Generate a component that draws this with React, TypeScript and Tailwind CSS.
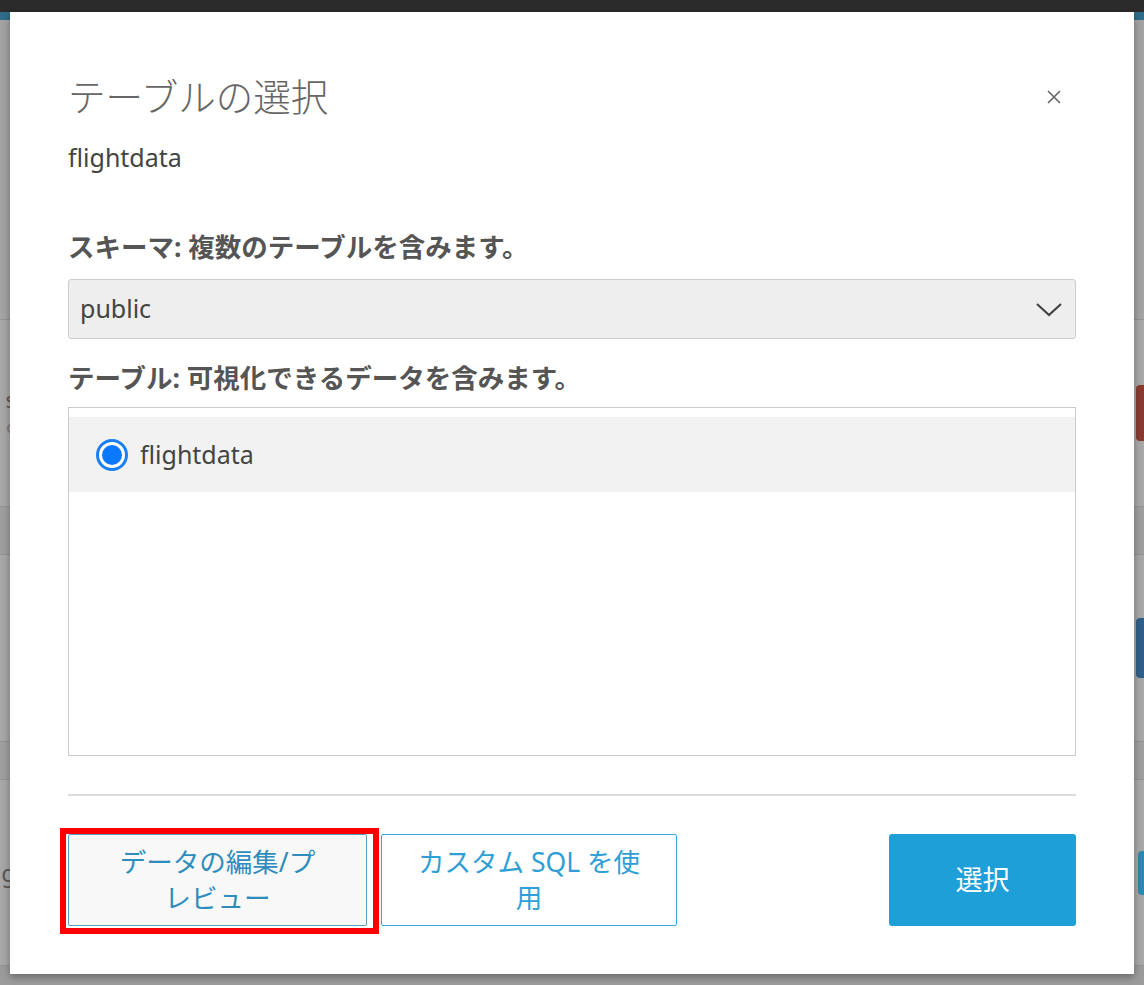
import React from "react";

const font = { fontFamily: '"Noto Sans", "Noto Sans CJK JP", sans-serif' };

function Background() {
  return (
    <div className="flex h-full w-full flex-col bg-[#a4a4a4]">
      <div className="h-[12px] bg-[#2b2b2b]" />
      <div className="h-[8px] bg-[#2f6c8a]" />
      <div className="h-[300px] border-b border-[#939393]" />
      <div className="flex h-[187px] items-center justify-between border-b border-[#939393] bg-[#a8a8a8]">
        <div className="flex h-full w-[10px] flex-col items-end justify-center overflow-hidden text-[22px] leading-[28px] text-[#5a5a5a]">
          <span className="-mr-[6px]">s</span>
          <span className="-mr-[6px] text-[16px] text-[#777]">o</span>
        </div>
        <div className="h-[56px] w-[8px] rounded-l-[4px] bg-[#8a3a30]" />
      </div>
      <div className="h-[48px] border-b border-[#939393] bg-[#9f9f9f]" />
      <div className="flex h-[187px] items-center justify-end border-b border-[#939393] bg-[#a8a8a8]">
        <div className="h-[60px] w-[8px] rounded-l-[4px] bg-[#2f5f8a]" />
      </div>
      <div className="h-[38px] border-b border-[#939393] bg-[#a0a0a0]" />
      <div className="flex h-[186px] items-center justify-between border-b border-[#939393] bg-[#a8a8a8]">
        <div className="flex w-[10px] justify-end overflow-hidden text-[24px] text-[#5a5a5a]">
          <span className="-mr-[6px]">g</span>
        </div>
        <div className="h-[44px] w-[6px] rounded-l-[4px] bg-[#2d8ab0]" />
      </div>
      <div className="flex-1 bg-[#9c9c9c]" />
    </div>
  );
}

export default function App() {
  return (
    <div className="relative h-[985px] w-[1144px] overflow-hidden" style={font}>
      <Background />
      <div className="absolute left-[10px] top-[12px] flex h-[962px] w-[1124px] flex-col bg-white px-[58px] pt-[60px] shadow-[0_3px_8px_rgba(0,0,0,0.35)]">
        <div className="flex h-[50px] items-center justify-between">
          <h1 className="text-[37.5px] font-light leading-[50px] text-[#666]">テーブルの選択</h1>
          <button className="mr-[12px] flex h-[20px] w-[20px] items-center justify-center">
            <svg width="16" height="16" viewBox="0 0 16 16">
              <path d="M2 2 L14 14 M14 2 L2 14" stroke="#666" strokeWidth="1.6" fill="none" />
            </svg>
          </button>
        </div>
        <div className="mt-[20px] text-[25px] leading-[30px] text-[#444]">flightdata</div>

        <div className="mt-[59px] text-[26.5px] font-bold leading-[32px] text-[#555]">
          スキーマ: 複数のテーブルを含みます。
        </div>
        <div className="mt-[16px] flex h-[60px] items-center justify-between rounded-[3px] border border-[#cccccc] bg-[#eeeeee] pl-[11px] pr-[12px]">
          <span className="text-[25px] text-[#444]">public</span>
          <svg width="28" height="16" viewBox="0 0 28 16">
            <path d="M2 3 L14 14 L26 3" stroke="#444" strokeWidth="2.2" fill="none" />
          </svg>
        </div>

        <div className="mt-[23px] text-[26.5px] font-bold leading-[32px] text-[#555]">
          テーブル: 可視化できるデータを含みます。
        </div>
        <div className="mt-[13px] h-[349px] border border-[#cccccc] bg-white pt-[9px]">
          <div className="flex h-[75px] items-center bg-[#f2f2f2] pl-[27px]">
            <span className="flex h-[32px] w-[32px] items-center justify-center rounded-full border-[3px] border-[#1a7ff5] bg-white">
              <span className="h-[20px] w-[20px] rounded-full bg-[#0a78ff]" />
            </span>
            <span className="ml-[12px] text-[25px] text-[#444]">flightdata</span>
          </div>
        </div>

        <div className="mt-[38px] h-[2px] bg-[#dcdcdc]" />

        <div className="mt-[38px] flex items-start">
          <div className="relative">
            <button className="flex h-[92px] w-[299px] items-center justify-center rounded-[2px] border border-[#5a9ec4] bg-[#f8f8f8] text-[26.5px] leading-[36px] text-[#2e8dbd]">
              データの編集/プ<br />レビュー
            </button>
            <div className="pointer-events-none absolute -bottom-[8px] -left-[8px] -right-[12px] -top-[6px] border-[6px] border-[#ff0000]" />
          </div>
          <button className="ml-[14px] flex h-[92px] w-[296px] items-center justify-center rounded-[2px] border border-[#3aa6dc] bg-white text-[26.5px] leading-[36px] text-[#2e9fd6]">
            カスタム SQL を使<br />用
          </button>
          <div className="flex-1" />
          <button className="flex h-[92px] w-[187px] items-center justify-center rounded-[3px] bg-[#1f9fd8] text-[27px] text-white">
            選択
          </button>
        </div>
      </div>
    </div>
  );
}
